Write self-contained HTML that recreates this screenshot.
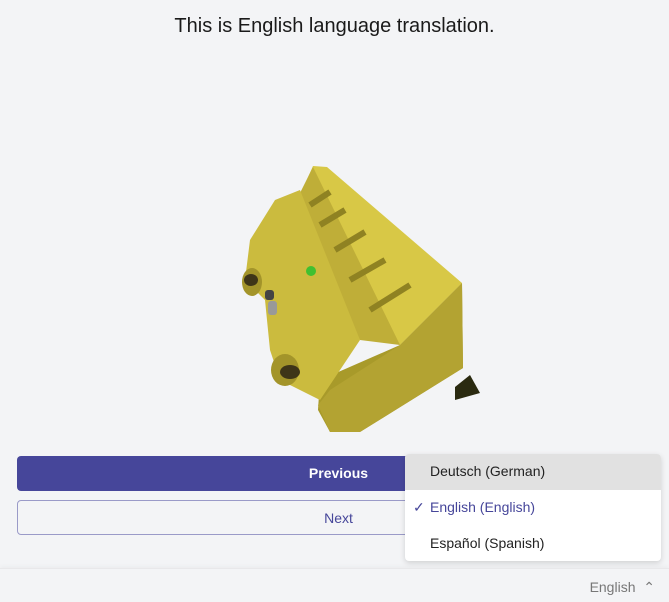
<!DOCTYPE html>
<html><head><meta charset="utf-8"><style>
body{margin:0;width:669px;height:601px;background:#f3f4f6;font-family:"Source Sans Pro","Liberation Sans",sans-serif;position:relative;overflow:hidden}
h1{position:absolute;top:15px;left:0;width:669px;text-align:center;margin:0;font-size:20px;font-weight:500;color:#1a1a1a}
.btn{position:absolute;left:17px;width:643px;height:35px;border-radius:4px;box-sizing:border-box;text-align:center;line-height:35px;font-size:14px}
.prev{top:456px;background:#46469a;color:#fff;font-weight:bold}
.next{top:500px;border:1px solid #9a9ac8;color:#46469a;background:#f3f4f6}
.dd{position:absolute;left:405px;top:454px;width:256px;height:107px;background:#fff;border-radius:4px;box-shadow:0 2px 6px rgba(0,0,0,.15);overflow:hidden;font-size:14px}
.dd div{height:36px;line-height:34px;padding-left:25px;color:#222}
.dd .sel{background:#e1e1e1}
.dd .cur{color:#46469a;position:relative}
.dd .cur span{position:absolute;left:8px}
.foot{position:absolute;left:0;top:568px;width:669px;height:33px;background:#f3f4f6;border-top:1px solid #e8e8ea;box-shadow:0 -2px 4px rgba(0,0,0,.03)}
.foot div{position:absolute;right:14px;top:10px;font-size:14px;color:#777}
</style></head><body>
<h1>This is English language translation.</h1>
<svg style="position:absolute;left:0;top:0" width="669" height="450">
<polygon points="462,283 463,368 360,432 330,432 318,410 320,380 400,345" fill="#a89a2a"/>
<polygon points="313,166 327,167 462,283 400,345 358,330 340,230 300,195" fill="#d8c846"/>
<polygon points="300,193 313,167 400,345 360,340 320,300 290,250" fill="#bfae38"/>
<polygon points="275,200 300,190 360,340 320,400 300,390 280,380 270,350 265,300 245,280 250,240" fill="#cbbb3e"/>
<polygon points="462,283 463,368 360,432 330,432 318,405 330,390 400,345" fill="#b3a332"/>
<path d="M310,205 L330,192 M320,225 L345,210 M335,250 L365,232 M350,280 L385,260 M370,310 L410,285" stroke="#8f8222" stroke-width="6"/>
<ellipse cx="252" cy="282" rx="10" ry="14" fill="#a3942a"/>
<ellipse cx="285" cy="370" rx="14" ry="16" fill="#a3942a"/>
<ellipse cx="251" cy="280" rx="7" ry="6" fill="#3e3518"/>
<ellipse cx="290" cy="372" rx="10" ry="7" fill="#3e3518"/>
<rect x="265" y="290" width="9" height="10" rx="3" fill="#444"/>
<rect x="268" y="301" width="9" height="14" rx="3" fill="#999"/>
<circle cx="311" cy="271" r="5" fill="#40c030"/>
<polygon points="455,387 470,375 480,393 455,400" fill="#2a2a10"/>
</svg>
<div class="btn prev">Previous</div>
<div class="btn next">Next</div>
<div class="dd">
<div class="sel">Deutsch (German)</div>
<div class="cur"><span>✓</span>English (English)</div>
<div>Español (Spanish)</div>
</div>
<div class="foot"><div>English &nbsp;⌃</div></div>
</body></html>
